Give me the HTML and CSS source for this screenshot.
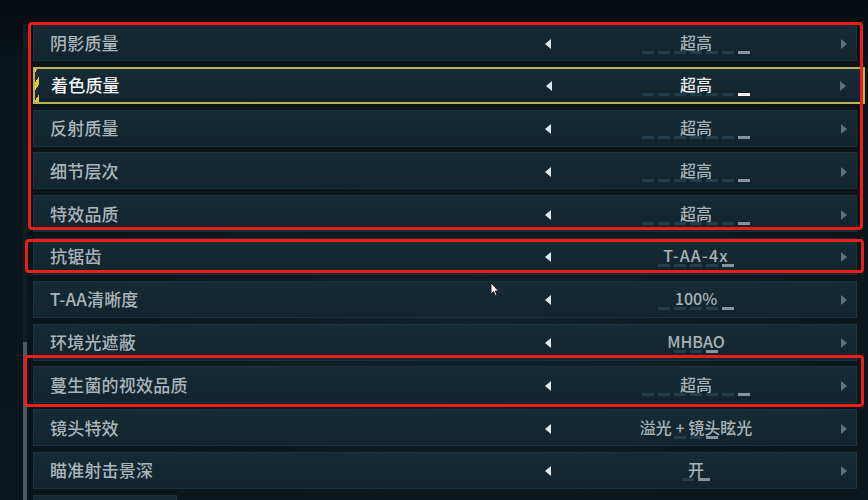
FILE: index.html
```html
<!DOCTYPE html>
<html lang="zh-CN">
<head>
<meta charset="utf-8">
<title>图形设置</title>
<link rel="stylesheet" href="styles.css">
</head>
<body>
<div class="screen">
  <div class="scrollbar"><div class="thumb"></div></div>
  <div class="list">
    <div class="row">
      <span class="label">阴影质量</span>
      <span class="arrow left"></span>
      <span class="value"><span class="vtext">超高</span><span class="dashes"><i></i><i></i><i></i><i></i><i></i><i></i><i class="on"></i></span></span>
      <span class="arrow right"></span>
    </div>
    <div class="row active">
      <span class="label">着色质量</span>
      <span class="arrow left"></span>
      <span class="value"><span class="vtext">超高</span><span class="dashes"><i></i><i></i><i></i><i></i><i></i><i></i><i class="on"></i></span></span>
      <span class="arrow right"></span>
    </div>
    <div class="row">
      <span class="label">反射质量</span>
      <span class="arrow left"></span>
      <span class="value"><span class="vtext">超高</span><span class="dashes"><i></i><i></i><i></i><i></i><i></i><i></i><i class="on"></i></span></span>
      <span class="arrow right"></span>
    </div>
    <div class="row">
      <span class="label">细节层次</span>
      <span class="arrow left"></span>
      <span class="value"><span class="vtext">超高</span><span class="dashes"><i></i><i></i><i></i><i></i><i></i><i></i><i class="on"></i></span></span>
      <span class="arrow right"></span>
    </div>
    <div class="row">
      <span class="label">特效品质</span>
      <span class="arrow left"></span>
      <span class="value"><span class="vtext">超高</span><span class="dashes"><i></i><i></i><i></i><i></i><i></i><i></i><i class="on"></i></span></span>
      <span class="arrow right"></span>
    </div>
    <div class="row">
      <span class="label">抗锯齿</span>
      <span class="arrow left"></span>
      <span class="value"><span class="vtext wide">T-AA-4x</span><span class="dashes"><i></i><i></i><i></i><i></i><i class="on"></i></span></span>
      <span class="arrow right"></span>
    </div>
    <div class="row">
      <span class="label">T-AA清晰度</span>
      <span class="arrow left"></span>
      <span class="value"><span class="vtext">100%</span><span class="dashes"><i></i><i></i><i></i><i></i><i class="on"></i></span></span>
      <span class="arrow right"></span>
    </div>
    <div class="row">
      <span class="label">环境光遮蔽</span>
      <span class="arrow left"></span>
      <span class="value"><span class="vtext">MHBAO</span><span class="dashes"><i></i><i></i><i class="on"></i></span></span>
      <span class="arrow right"></span>
    </div>
    <div class="row">
      <span class="label">蔓生菌的视效品质</span>
      <span class="arrow left"></span>
      <span class="value"><span class="vtext">超高</span><span class="dashes"><i></i><i></i><i></i><i></i><i></i><i></i><i class="on"></i></span></span>
      <span class="arrow right"></span>
    </div>
    <div class="row">
      <span class="label">镜头特效</span>
      <span class="arrow left"></span>
      <span class="value"><span class="vtext">溢光 + 镜头眩光</span><span class="dashes"><i></i><i></i><i class="on"></i></span></span>
      <span class="arrow right"></span>
    </div>
    <div class="row">
      <span class="label">瞄准射击景深</span>
      <span class="arrow left"></span>
      <span class="value"><span class="vtext">开</span><span class="dashes"><i></i><i class="on"></i></span></span>
      <span class="arrow right"></span>
    </div>
    <div class="row stub"></div>
  </div>

  <div class="mark mark-1"></div>
  <div class="mark mark-2"></div>
  <div class="mark mark-3"></div>

  <svg class="cursor" width="10" height="15" viewBox="0 0 10 15">
    <path d="M1 1 L1 12 L3.6 9.6 L5.4 13.8 L7 13.1 L5.3 9 L8.6 9 Z" fill="#ffffff" stroke="#1a1a1a" stroke-width="0.9" stroke-linejoin="round"/>
  </svg>
</div>
</body>
</html>
```

FILE: styles.css
```css
* { box-sizing: border-box; }

html, body {
  margin: 0;
  padding: 0;
}

body {
  width: 868px;
  height: 500px;
  overflow: hidden;
  background: #081016;
  font-family: "Noto Sans CJK SC", "Noto Sans", sans-serif;
}

.screen {
  position: relative;
  width: 868px;
  height: 500px;
  overflow: hidden;
  display: flex;
  background:
    radial-gradient(ellipse 600px 260px at 480px 330px, rgba(30, 60, 75, 0.35), rgba(0, 0, 0, 0) 70%),
    linear-gradient(180deg, #060b0f 0px, #0a141a 60px, #0b161c 100%);
}

.scrollbar {
  margin-left: 23px;
  margin-top: 24px;
  width: 4px;
  height: 476px;
  background: #121d23;
  display: flex;
  flex-direction: column;
  justify-content: flex-end;
}

.scrollbar .thumb {
  height: 158px;
  background: #4a5b63;
}

.list {
  margin-left: 6px;
  padding-top: 24px;
  display: flex;
  flex-direction: column;
  gap: 5.8px;
}

.row {
  width: 824px;
  height: 37px;
  flex: none;
  display: grid;
  grid-template-columns: 511px 6px 1fr 6px;
  align-items: center;
  padding-right: 9px;
  background: linear-gradient(180deg, #152b36 0%, #12242e 100%);
  border: 1px solid #1c3440;
  border-bottom-color: #183240;
}

.row.stub {
  width: 144px;
}

.label {
  padding-left: 16px;
  font-size: 17px;
  line-height: 20px;
  font-weight: 500;
  color: #aab5ba;
  letter-spacing: 0.2px;
  white-space: nowrap;
}

.arrow {
  width: 0;
  height: 0;
  border-top: 5px solid transparent;
  border-bottom: 5px solid transparent;
  margin-top: 2px;
}

.arrow.left {
  border-right: 6px solid #e2e8ea;
}

.arrow.right {
  border-left: 6px solid #5f727b;
}

.value {
  display: flex;
  flex-direction: column;
  align-items: center;
  justify-content: center;
}

.vtext {
  font-size: 16px;
  line-height: 20px;
  font-weight: 500;
  color: #a8b3b7;
  white-space: nowrap;
}

.vtext.wide {
  letter-spacing: 1.2px;
}

.dashes {
  display: flex;
  gap: 4px;
  margin-top: -1px;
  height: 3px;
}

.dashes i {
  display: block;
  width: 12px;
  height: 3px;
  background: #203e4c;
}

.dashes i.on {
  background: #8596a0;
}

.row.active {
  width: 832px;
  padding-right: 17px;
  border: 2px solid #bdb650;
  background:
    repeating-linear-gradient(-60deg, #d8cf3c 0 4px, #1a2a30 4px 9px) left top / 4px 100% no-repeat,
    linear-gradient(180deg, #152b36 0%, #12242e 100%);
}

.row.active .label {
  color: #f2f4f4;
}

.row.active .vtext {
  color: #e6eaec;
}

.row.active .dashes i {
  background: #1d3a48;
}

.row.active .dashes i.on {
  background: #f2f2f2;
}

.mark {
  position: absolute;
  border: 3px solid #ee1d16;
  border-radius: 4px;
  pointer-events: none;
}

.mark-1 {
  left: 28px;
  top: 22px;
  width: 835px;
  height: 208px;
}

.mark-2 {
  left: 25px;
  top: 239px;
  width: 839px;
  height: 34px;
}

.mark-3 {
  left: 24px;
  top: 355px;
  width: 840px;
  height: 52px;
}

.cursor {
  position: absolute;
  left: 490px;
  top: 282px;
}
```
